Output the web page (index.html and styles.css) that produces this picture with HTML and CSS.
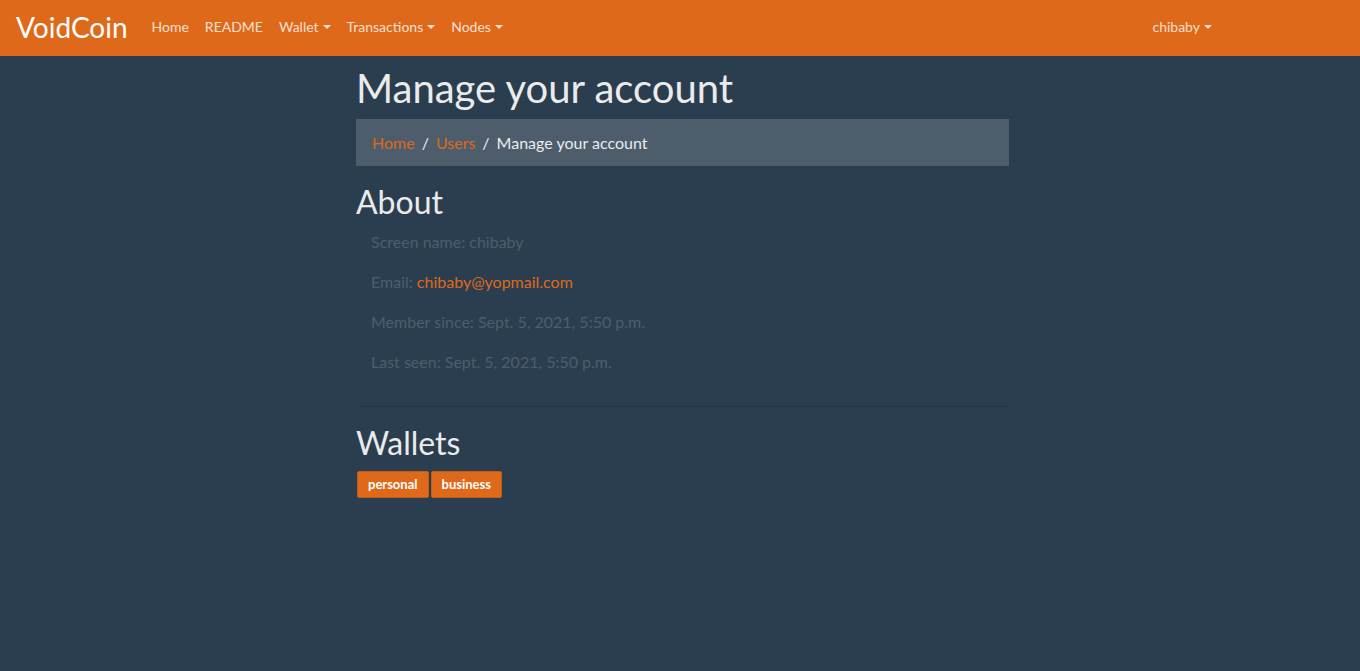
FILE: index.html
```html
<!DOCTYPE html>
<html lang="en">
<head>
<meta charset="utf-8">
<title>Manage your account</title>
<link rel="stylesheet" href="styles.css">
</head>
<body>
<nav class="navbar">
  <a class="brand" href="#">VoidCoin</a>
  <ul class="nav">
    <li><a class="nav-link" href="#">Home</a></li>
    <li><a class="nav-link" href="#">README</a></li>
    <li><a class="nav-link dropdown" href="#">Wallet</a></li>
    <li><a class="nav-link dropdown" href="#">Transactions</a></li>
    <li><a class="nav-link dropdown" href="#">Nodes</a></li>
  </ul>
  <ul class="nav nav-right">
    <li><a class="nav-link dropdown" href="#">chibaby</a></li>
  </ul>
</nav>
<main class="content">
  <h1 class="title">Manage your account</h1>
  <ol class="breadcrumb">
    <li><a href="#">Home</a></li>
    <li class="sep">/</li>
    <li><a href="#">Users</a></li>
    <li class="sep">/</li>
    <li class="active">Manage your account</li>
  </ol>
  <h2 class="section">About</h2>
  <div class="about">
    <p>Screen name: chibaby</p>
    <p>Email: <a href="#">chibaby@yopmail.com</a></p>
    <p>Member since: Sept. 5, 2021, 5:50 p.m.</p>
    <p>Last seen: Sept. 5, 2021, 5:50 p.m.</p>
  </div>
  <hr class="rule">
  <h2 class="section">Wallets</h2>
  <div class="wallets">
    <a class="wallet-btn" href="#">personal</a>
    <a class="wallet-btn" href="#">business</a>
  </div>
</main>
</body>
</html>
```
FILE: styles.css
```css
* { box-sizing: border-box; }
html, body { margin: 0; padding: 0; }
body {
  background: #2b3e50;
  color: #ebebeb;
  font-family: Lato, "Noto Sans", "Liberation Sans", sans-serif;
  font-size: 16px;
  line-height: 1.5;
  min-height: 671px;
}
a { text-decoration: none; color: #df691a; }

.navbar {
  display: flex;
  align-items: center;
  height: 56px;
  background: #df691a;
  padding: 0 16px;
}
.brand {
  color: #fff;
  font-size: 28px;
  line-height: 1.2;
  margin-right: 16px;
  padding-bottom: 1px;
}
.nav {
  display: flex;
  list-style: none;
  margin: 0;
  padding: 0 0 3px;
}
.nav-right { margin-left: auto; margin-right: 124px; }
.nav-link {
  display: block;
  padding: 8px;
  color: rgba(255, 255, 255, 0.8);
  font-size: 14px;
  line-height: 21px;
}
.dropdown::after {
  content: "";
  display: inline-block;
  margin-left: 4px;
  vertical-align: 3px;
  border-top: 4px solid;
  border-left: 4px solid transparent;
  border-right: 4px solid transparent;
}

.content {
  width: 653px;
  margin-left: 356px;
  padding-top: 8px;
}
.title {
  margin: 0 0 7px;
  font-size: 40px;
  font-weight: 400;
  line-height: 48px;
}
.breadcrumb {
  display: flex;
  align-items: center;
  list-style: none;
  margin: 0 0 17px;
  padding: 0 16px;
  height: 47px;
  background: #4e5d6c;
  line-height: 24px;
}
.breadcrumb .sep { padding: 0 7px; color: #ebebeb; }
.breadcrumb .active { color: #ebebeb; }
.section {
  margin: 0 0 8px;
  font-size: 32px;
  font-weight: 400;
  line-height: 38.4px;
}
.about {
  padding: 1px 0 16px 15px;
  color: #4e5d6c;
}
.about p {
  margin: 0 0 16px;
}
.rule {
  border: 0;
  border-top: 1px solid rgba(0, 0, 0, 0.1);
  margin: 0 0 17px;
}
.wallets {
  display: flex;
  gap: 2px;
  padding-left: 1px;
}
.wallet-btn {
  display: inline-flex;
  align-items: center;
  height: 27px;
  padding: 0 10px;
  background: #df691a;
  border: 1px solid #c45c16;
  border-radius: 2px;
  color: #fff;
  font-size: 13px;
  font-weight: 700;
}
```
